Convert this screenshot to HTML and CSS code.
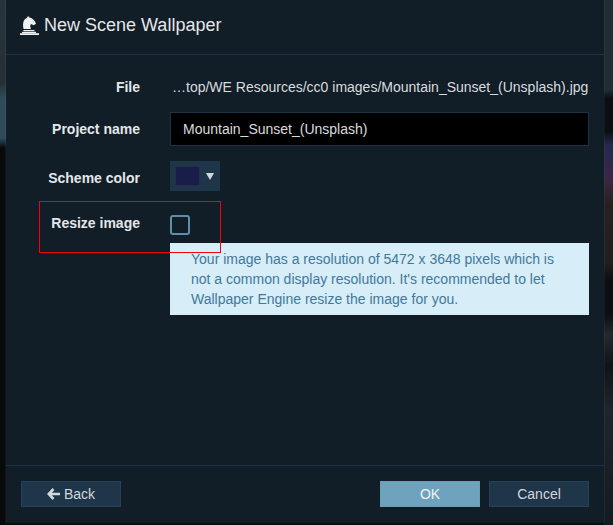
FILE: index.html
```html
<!DOCTYPE html>
<html lang="en">

<head>
  <meta charset="UTF-8">
  <meta name="viewport" content="width=device-width, initial-scale=1.0">
  <title>New Scene Wallpaper</title>
  <link rel="stylesheet" href="styles.css">
</head>

<body>
  <div class="modal">
    <!-- header -->
    <div class="modal-header">
      <svg class="chess-icon" viewBox="0 0 19 19" width="19" height="19">
        <path d="M8 0 L9.4 1.4 C12.4 2 15.4 4.6 16 7.8 L13.6 9.2 L11 8 C10 9.4 10.2 11 11 13 L3.6 13 C2.6 10 3 6 4.2 4 C5.4 2.6 7.4 2 8 0 Z" fill="#eef0f1" />
        <rect x="3.5" y="14" width="11" height="1.2" fill="#eef0f1" />
        <rect x="2" y="15.8" width="14" height="1.2" fill="#eef0f1" />
        <rect x="0" y="17.2" width="19" height="1.8" fill="#eef0f1" />
      </svg>
      <span class="modal-title">New Scene Wallpaper</span>
    </div>

    <!-- form -->
    <div class="modal-body">
      <div class="row row-file">
        <label class="row-label">File</label>
        <div class="file-path">…top/WE Resources/cc0 images/Mountain_Sunset_(Unsplash).jpg</div>
      </div>
      <div class="row row-name">
        <label class="row-label" for="project">Project name</label>
        <input class="text-input" type="text" id="project" value="Mountain_Sunset_(Unsplash)">
      </div>
      <div class="row row-color">
        <label class="row-label">Scheme color</label>
        <div class="color-button">
          <span class="color-swatch"></span>
          <span class="color-caret"></span>
        </div>
      </div>
      <div class="row row-resize">
        <label class="row-label">Resize image</label>
        <span class="checkbox"></span>
      </div>
      <div class="info-box">Your image has a resolution of 5472 x 3648 pixels which is not a common display resolution. It's recommended to let Wallpaper Engine resize the image for you.</div>
      <div class="highlight"></div>
    </div>

    <!-- footer -->
    <div class="modal-footer">
      <button class="btn">
        <svg class="back-icon" viewBox="0 0 14 12" width="14" height="12">
          <path d="M6.5 1 L1.8 6 L6.5 11 M2 6 L13 6" fill="none" stroke="#d4d8dc" stroke-width="2.6" />
        </svg>
        Back
      </button>
      <div class="footer-right">
        <button class="btn btn-primary">OK</button>
        <button class="btn">Cancel</button>
      </div>
    </div>
  </div>
</body>

</html>
```

FILE: styles.css
```css
/* page */
html,
body {
  height: 100%;
}

body {
  margin: 0;
  overflow: hidden;
  font-family: "Liberation Sans", Arial, sans-serif;
  background-color: #0a0d10;
  background-image:
    linear-gradient(to bottom, #26333d 0, #262f36 83px, #2f4b5a 98px, #2f4b5a 138px, #07090b 148px, #07090b 100%),
    linear-gradient(to bottom, #222c33 0, #222c33 90px, #0c0f12 98px, #0c0f12 132px, #24294f 145px, #3a2740 180px, #24211f 205px, #22201f 262px, #0c0f12 280px, #0c0f12 315px, #222a30 335px, #0f1418 365px, #1c262c 410px, #141b20 100%);
  background-repeat: no-repeat;
  background-position: left top, right top;
  background-size: 6px 100%, 9px 100%;
}

/* modal */
.modal {
  display: flex;
  flex-direction: column;
  width: 598px;
  height: 522px;
  margin-left: 6px;
  background-color: #111d27;
  box-shadow: 0 0 0 1px rgba(255, 255, 255, 0.05);
}

.modal-header {
  display: flex;
  align-items: center;
  gap: 5px;
  height: 55px;
  padding-left: 14px;
  padding-bottom: 3px;
  box-sizing: border-box;
  border-bottom: 1px solid #1e3247;
}

.chess-icon {
  flex: none;
}

.modal-title {
  font-size: 18px;
  color: #e4e7e9;
}

/* form */
.modal-body {
  position: relative;
  flex: 1;
}

.row {
  display: flex;
  align-items: center;
  padding-right: 15px;
}

.row-label {
  flex: none;
  width: 134px;
  text-align: right;
  font-size: 14px;
  font-weight: bold;
  color: #e4e7e9;
}

.row-file {
  height: 24px;
  margin-top: 20px;
}

.file-path {
  margin-left: 32px;
  font-size: 14px;
  color: #d9dcde;
  white-space: nowrap;
}

.row-name {
  margin-top: 13px;
}

.text-input {
  flex: 1;
  height: 34px;
  margin-left: 30px;
  padding: 0 12px;
  box-sizing: border-box;
  border: 1px solid #1e3247;
  background-color: #000;
  color: #d9dcde;
  font-family: inherit;
  font-size: 14px;
  outline: none;
}

.row-color {
  margin-top: 15px;
}

.row-color .row-label {
  margin-top: 4px;
}

.color-button {
  display: flex;
  align-items: center;
  width: 50px;
  height: 30px;
  margin-left: 30px;
  padding-left: 5px;
  box-sizing: border-box;
  background-color: #1f3549;
}

.color-swatch {
  width: 25px;
  height: 20px;
  box-sizing: border-box;
  border: 1px solid #26303c;
  background-color: #191d4a;
}

.color-caret {
  width: 0;
  height: 0;
  margin-left: 6px;
  border-left: 4px solid transparent;
  border-right: 4px solid transparent;
  border-top: 7px solid #d4d8dc;
}

.row-resize {
  margin-top: 24px;
}

.row-resize .row-label {
  margin-top: -4px;
}

.checkbox {
  width: 20px;
  height: 20px;
  margin-left: 30px;
  box-sizing: border-box;
  border: 2px solid #5c90aa;
  border-radius: 3px;
}

.info-box {
  width: 419px;
  height: 72px;
  margin-top: 8px;
  margin-left: 164px;
  padding: 6px 21px;
  box-sizing: border-box;
  background-color: #d7edf7;
  color: #41799c;
  font-size: 14px;
  line-height: 20px;
}

/* red annotation drawn over the form */
.highlight {
  position: absolute;
  left: 33px;
  top: 146px;
  width: 182px;
  height: 52px;
  box-sizing: border-box;
  border: 1px solid #f5000b;
}

/* footer */
.modal-footer {
  display: flex;
  justify-content: space-between;
  align-items: center;
  height: 57px;
  padding: 0 15px;
  box-sizing: border-box;
  border-top: 1px solid #1e3247;
}

.footer-right {
  display: flex;
  gap: 9px;
}

.btn {
  display: flex;
  align-items: center;
  justify-content: center;
  gap: 3px;
  width: 100px;
  height: 26px;
  padding: 0;
  box-sizing: border-box;
  border: 1px solid #25415b;
  background-color: #1f3549;
  color: #d4d8dc;
  font-family: inherit;
  font-size: 14px;
}

.btn-primary {
  border-color: #6a9fb9;
  background-color: #6fa3bd;
  color: #eef3f6;
}
```
